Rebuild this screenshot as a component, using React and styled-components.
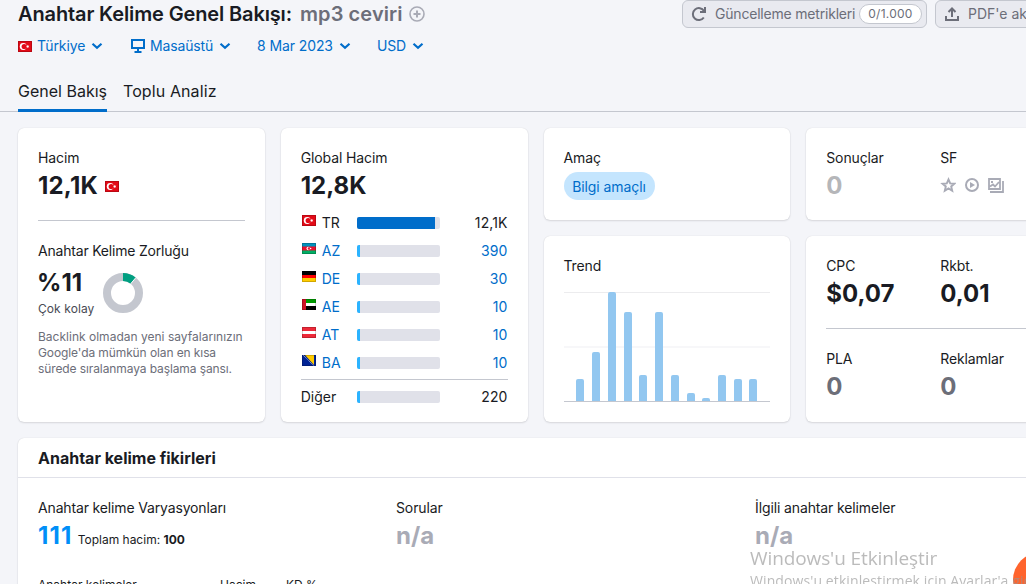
import React from "react";
import styled, { createGlobalStyle } from "styled-components";

const GlobalStyle = createGlobalStyle`
  * {
    box-sizing: border-box;
  }
  body {
    margin: 0;
    background: #f4f5f9;
    color: #191b23;
    font-family: Inter, "Liberation Sans", sans-serif;
    font-size: 14px;
    line-height: 20px;
    overflow: hidden;
  }
`;

const Page = styled.div`
  width: 100vw;
  height: 584px;
  overflow: hidden;
  white-space: nowrap;
`;

const Header = styled.header`
  height: 112px;
  padding: 0 0 0 18px;
  border-bottom: 1px solid #c4c7cf;
`;

const TitleRow = styled.div`
  display: flex;
  height: 28px;
  width: 1080px;
`;

const Title = styled.h1`
  margin: 0;
  width: 664px;
  display: flex;
  align-items: center;
  font-size: 20px;
  line-height: 28px;
  font-weight: 600;
  letter-spacing: -0.13px;
`;

const Keyword = styled.span`
  color: #6c6e79;
  margin: 0 6px 0 8px;
  letter-spacing: 0.1px;
`;

const HeadButton = styled.button`
  display: flex;
  align-items: center;
  flex: none;
  width: ${(p) => p.$width}px;
  height: 28px;
  margin-right: 8px;
  padding: 0 4px 0 8px;
  border: 1px solid #c4c7cf;
  border-radius: 6px;
  background: #e9eaf0;
  color: #6c6e79;
  font: 14px/20px Inter, sans-serif;
  letter-spacing: ${(p) => p.$spacing || 0}px;
  svg {
    flex: none;
    margin-right: 8px;
  }
`;

const Counter = styled.span`
  margin-left: auto;
  width: 63px;
  height: 20px;
  border: 1px solid #c4c7cf;
  border-radius: 10px;
  background: #fff;
  font-size: 12px;
  line-height: 18px;
  letter-spacing: 0.25px;
  text-align: center;
`;

const Filters = styled.div`
  display: flex;
  margin-top: 8px;
  height: 20px;
`;

const Filter = styled.div`
  display: flex;
  align-items: center;
  flex: none;
  width: ${(p) => p.$width}px;
  color: #006dca;
  letter-spacing: ${(p) => p.$spacing || 0}px;
  svg {
    flex: none;
  }
  svg:first-child {
    margin-right: 5px;
  }
  svg:last-child {
    margin-left: 6px;
  }
`;

const Tabs = styled.div`
  display: flex;
  gap: 16px;
  margin-top: 15px;
`;

const Tab = styled.div`
  height: 41px;
  font-size: 16px;
  line-height: 41px;
  width: ${(p) => p.$width}px;
  letter-spacing: ${(p) => p.$spacing || 0}px;
  border-bottom: 3px solid ${(p) => (p.$active ? "#006dca" : "transparent")};
`;

const Cards = styled.div`
  display: grid;
  grid-template-columns: repeat(4, 246.75px);
  grid-template-rows: 92px 186px;
  gap: 16px;
  padding: 16px 0 0 18px;
`;

const Card = styled.section`
  grid-row: ${(p) => (p.$tall ? "1 / 3" : "auto")};
  padding: 20px;
  background: #fff;
  border-radius: 6px;
  box-shadow: 0 0 1px rgba(25, 27, 35, 0.16), 0 1px 2px rgba(25, 27, 35, 0.12);
`;

const Label = styled.div`
  height: 20px;
  letter-spacing: ${(p) => p.$spacing || -0.12}px;
`;

const Value = styled.div`
  display: flex;
  align-items: center;
  height: 32px;
  margin-top: 2px;
  font-size: 24px;
  line-height: 32px;
  font-weight: 700;
  color: ${(p) => p.$color || "#191b23"};
  letter-spacing: ${(p) => p.$spacing || 0}px;
  svg {
    margin-left: 7px;
  }
`;

const Divider = styled.div`
  height: 1px;
  background: #c4c7cf;
  margin: ${(p) => p.$margin};
`;

const Difficulty = styled.div`
  display: flex;
  height: 58px;
  margin-top: 6px;
`;

const DifficultyText = styled.div`
  width: 65px;
  font-size: 12px;
  line-height: 16px;
  color: #484a54;
  letter-spacing: 0.08px;
  ${Value} {
    margin: 0 0 2px -1px;
  }
`;

const Donut = styled.svg`
  margin-top: 6px;
`;

const Description = styled.p`
  margin: 4px 0 0;
  font-size: 12px;
  line-height: 16px;
  color: #6c6e79;
`;

const DescriptionLine = styled.span`
  display: block;
  letter-spacing: ${(p) => p.$spacing}px;
`;

const Countries = styled.div`
  margin-top: 7px;
`;

const Country = styled.div`
  display: grid;
  grid-template-columns: 21px 35px 83px 1fr;
  align-items: center;
  height: 28px;
  color: ${(p) => (p.$link ? "#006dca" : "#191b23")};
  svg {
    margin: 0 0 5px 1px;
  }
`;

const CountryName = styled.span`
  grid-column: ${(p) => (p.$wide ? "1 / 3" : "auto")};
`;

const Track = styled.div`
  height: 12px;
  border-radius: 2px;
  overflow: hidden;
  background: #e0e1e9;
`;

const Fill = styled.div`
  height: 12px;
  background: ${(p) => (p.$main ? "#006dca" : "#2bb3ff")};
`;

const Amount = styled.span`
  text-align: right;
  letter-spacing: 0.1px;
`;

const Intent = styled.span`
  display: inline-block;
  margin-top: 4px;
  width: 91px;
  height: 28px;
  border-radius: 14px;
  background: #c4e5fe;
  color: #006dca;
  line-height: 29px;
  letter-spacing: -0.08px;
  text-align: center;
`;

const Chart = styled.svg`
  display: block;
  margin-top: 16px;
`;

const Pair = styled.div`
  display: grid;
  grid-template-columns: 114px 1fr;
`;

const Features = styled.div`
  display: flex;
  gap: 8px;
  margin-top: 9px;
  color: #a9abb6;
`;

const Ideas = styled.section`
  width: 1035px;
  height: 300px;
  margin: 16px 0 0 18px;
  background: #fff;
  border-radius: 6px;
  box-shadow: 0 0 1px rgba(25, 27, 35, 0.16), 0 1px 2px rgba(25, 27, 35, 0.12);
`;

const IdeasTitle = styled.h2`
  margin: 0;
  height: 40px;
  padding-left: 20px;
  border-bottom: 1px solid #e0e1e9;
  font-size: 16px;
  line-height: 40px;
  font-weight: 700;
`;

const IdeasGrid = styled.div`
  display: grid;
  grid-template-columns: 358px 359px 1fr;
  padding: 20px 0 0 20px;
`;

const Total = styled.span`
  margin-left: 5px;
  padding-top: 7px;
  font-size: 12px;
  font-weight: 400;
  color: #191b23;
  letter-spacing: 0;
`;

const TableHead = styled.div`
  display: grid;
  grid-template-columns: 182px 66px 1fr;
  margin-top: 23px;
  font-size: 12px;
`;

const ChatBubble = styled.div`
  position: fixed;
  left: 1013px;
  top: 552px;
  width: 56px;
  height: 56px;
  border-radius: 50%;
  background: #ff642d;
`;

const Watermark = styled.div`
  position: fixed;
  left: 750px;
  top: 546px;
  width: 276px;
  overflow: hidden;
  white-space: nowrap;
  font-family: "Open Sans", sans-serif;
  font-size: 14px;
  line-height: 20px;
  letter-spacing: 0.1px;
  color: rgba(150, 150, 150, 0.65);
`;

const WatermarkTitle = styled.div`
  font-size: 19px;
  line-height: 25px;
  letter-spacing: -0.1px;
`;

const Chevron = () => (
  <svg width="12" height="12" viewBox="0 0 12 12" fill="none">
    <path d="M1.500 3.800 6 7.800l4.500-4" stroke="currentColor" strokeWidth="2.200" />
  </svg>
);

const flags = {
  TR: (
    <>
      <rect width="14" height="11" fill="#e30a17" />
      <circle cx="5.200" cy="5.500" r="3.400" fill="#fff" />
      <circle cx="6.200" cy="5.500" r="2.600" fill="#e30a17" />
      <path d="m8 5.500 1.200-.4.100-1.300.8 1 1.200-.3-.7 1 .7 1-1.200-.3-.8 1-.1-1.300z" fill="#fff" />
    </>
  ),
  AZ: (
    <>
      <rect width="14" height="11" fill="#e8112d" />
      <rect width="14" height="3.500" fill="#0092bc" />
      <rect y="7.500" width="14" height="3.500" fill="#00ae65" />
      <circle cx="6.300" cy="5.500" r="1.800" fill="#fff" />
      <circle cx="7" cy="5.500" r="1.300" fill="#e8112d" />
      <circle cx="8.600" cy="5.500" r=".8" fill="#fff" />
    </>
  ),
  DE: (
    <>
      <rect width="14" height="4" fill="#000" />
      <rect y="4" width="14" height="3" fill="#f00" />
      <rect y="7" width="14" height="4" fill="#fc0" />
    </>
  ),
  AE: (
    <>
      <rect width="14" height="4" fill="#009a00" />
      <rect y="4" width="14" height="3" fill="#fff" />
      <rect y="7" width="14" height="4" fill="#000" />
      <rect width="4" height="11" fill="#ce1126" />
    </>
  ),
  AT: (
    <>
      <rect width="14" height="11" fill="#ed2939" />
      <rect y="4" width="14" height="3" fill="#fff" />
    </>
  ),
  BA: (
    <>
      <rect width="14" height="11" fill="#002395" />
      <path d="M3 0h9v10z" fill="#fecb00" />
      <path d="m1 0 11 11" stroke="#fff" strokeOpacity=".7" strokeDasharray="1 .7" />
    </>
  ),
};

const Flag = ({ code }) => (
  <svg width="14" height="11" viewBox="0 0 14 11">
    {flags[code]}
    <rect x=".5" y=".5" width="13" height="10" fill="none" stroke="#000" strokeOpacity=".18" />
  </svg>
);

const countries = [
  { code: "TR", value: "12,1K", fill: 78 },
  { code: "AZ", value: "390", fill: 3 },
  { code: "DE", value: "30", fill: 3 },
  { code: "AE", value: "10", fill: 3 },
  { code: "AT", value: "10", fill: 3 },
  { code: "BA", value: "10", fill: 3 },
];

// [x, height]
const trend = [
  [12, 22],
  [28, 49],
  [44, 109],
  [60, 89],
  [75, 26],
  [91, 89],
  [107, 26],
  [123, 8],
  [138, 3],
  [154, 26],
  [170, 22],
  [185, 22],
];

const barPath = (x, h) => {
  const top = 109 - h;
  return `M${x} 109V${top + 2}q0-2 2-2h4q2 0 2 2V109z`;
};

const App = () => {
  return (
    <Page>
      <GlobalStyle />
      <Header>
        <TitleRow>
          <Title>
            Anahtar Kelime Genel Bakışı:
            <Keyword>mp3 ceviri</Keyword>
            <svg width="16" height="16" viewBox="0 0 16 16" fill="none" stroke="#a9abb6" strokeWidth="2">
              <circle cx="8" cy="8" r="7" strokeWidth="1.600" />
              <path d="M8 4.500v7M4.500 8h7" />
            </svg>
          </Title>
          <HeadButton $width={245} $spacing={-0.2}>
            <svg width="16" height="16" viewBox="0 0 16 16" fill="none" stroke="currentColor" strokeWidth="2">
              <path d="M12.800 11.500a6 6 0 1 1 .2-6.500" />
              <path d="M14 1v5H9" />
            </svg>
            Güncelleme metrikleri
            <Counter>0/1.000</Counter>
          </HeadButton>
          <HeadButton $width={140}>
            <svg width="16" height="16" viewBox="0 0 16 16" fill="none" stroke="currentColor" strokeWidth="2">
              <path d="M2 10v4h12v-4M8 11V3M4.500 6 8 2.500 11.500 6" />
            </svg>
            PDF'e aktar
          </HeadButton>
        </TitleRow>
        <Filters>
          <Filter $width={113} $spacing={-0.1}>
            <Flag code="TR" />
            Türkiye
            <Chevron />
          </Filter>
          <Filter $width={126} $spacing={-0.15}>
            <svg width="14" height="14" viewBox="0 0 14 14" fill="none" stroke="currentColor" strokeWidth="2">
              <path d="M1 1h12v8H1zM7 9v3M3.500 13h7" />
            </svg>
            Masaüstü
            <Chevron />
          </Filter>
          <Filter $width={120} $spacing={-0.1}>
            8 Mar 2023
            <Chevron />
          </Filter>
          <Filter $width={60} $spacing={-0.2}>
            USD
            <Chevron />
          </Filter>
        </Filters>
        <Tabs>
          <Tab $active $width={89}>Genel Bakış</Tab>
          <Tab $width={94} $spacing={0.1}>Toplu Analiz</Tab>
        </Tabs>
      </Header>

      <Cards>
        <Card $tall>
          <Label>Hacim</Label>
          <Value $spacing={0.2}>
            12,1K
            <Flag code="TR" />
          </Value>
          <Divider $margin="18px 0 20px" />
          <Label $spacing={-0.2}>Anahtar Kelime Zorluğu</Label>
          <Difficulty>
            <DifficultyText>
              <Value>%11</Value>
              Çok kolay
            </DifficultyText>
            <Donut width="40" height="40" viewBox="0 0 40 40" fill="none" strokeWidth="8">
              <circle cx="20" cy="20" r="16" stroke="#c4c7cf" />
              <path d="M20 4a16 16 0 0 1 10.200 3.700" stroke="#009f81" />
              <path d="m27.700 10.800 5.100-6.100" stroke="#fff" strokeWidth="1" />
            </Donut>
          </Difficulty>
          <Description>
            <DescriptionLine $spacing={0.01}>Backlink olmadan yeni sayfalarınızın</DescriptionLine>
            <DescriptionLine $spacing={-0.1}>Google'da mümkün olan en kısa</DescriptionLine>
            <DescriptionLine $spacing={-0.1}>sürede sıralanmaya başlama şansı.</DescriptionLine>
          </Description>
        </Card>

        <Card $tall>
          <Label>Global Hacim</Label>
          <Value>12,8K</Value>
          <Countries>
            {countries.map((c) => (
              <Country key={c.code} $link={c.code !== "TR"}>
                <Flag code={c.code} />
                <CountryName>{c.code}</CountryName>
                <Track>
                  <Fill $main={c.code === "TR"} style={{ width: c.fill }} />
                </Track>
                <Amount>{c.value}</Amount>
              </Country>
            ))}
            <Divider $margin="2px 0 3px" />
            <Country>
              <CountryName $wide>Diğer</CountryName>
              <Track>
                <Fill style={{ width: 3 }} />
              </Track>
              <Amount>220</Amount>
            </Country>
          </Countries>
        </Card>

        <Card>
          <Label>Amaç</Label>
          <Intent>Bilgi amaçlı</Intent>
        </Card>

        <Card>
          <Pair>
            <div>
              <Label>Sonuçlar</Label>
              <Value $color="#b5b6b9">0</Value>
            </div>
            <div>
              <Label>SF</Label>
              <Features>
                <svg width="16" height="16" viewBox="0 0 16 16" fill="none" stroke="currentColor" strokeWidth="1.900">
                  <path d="m8.500 2.500 1.700 3.900 4.200.3-3.200 2.700 1 4.300-3.700-2.300-3.700 2.300 1-4.300-3.200-2.700 4.200-.3z" />
                </svg>
                <svg width="16" height="16" viewBox="0 0 16 16" fill="none" stroke="currentColor" strokeWidth="2">
                  <circle cx="8" cy="8" r="6" />
                  <path d="m6 5 5 3-5 3z" fill="currentColor" stroke="none" />
                </svg>
                <svg width="16" height="16" viewBox="0 0 16 16" fill="none" stroke="currentColor" strokeWidth="1.800">
                  <path d="M1 2h11v10H1zM15 4v11H2M2 9.500l3-2 2 2 4-4.500" />
                  <path d="M3 4h2v2H3z" fill="currentColor" stroke="none" />
                </svg>
              </Features>
            </div>
          </Pair>
        </Card>

        <Card>
          <Label>Trend</Label>
          <Chart width="206" height="110" viewBox="0 0 206 110">
            <path d="M0 .5h206" stroke="#ececee" />
            <path d="M0 55h206" stroke="#f7f7f9" strokeWidth="2" />
            {trend.map(([x, h]) => (
              <path key={x} d={barPath(x, h)} fill="#92c7f0" />
            ))}
            <path d="M0 109.500h206" stroke="#c4c7cf" />
          </Chart>
        </Card>

        <Card>
          <Pair>
            <div>
              <Label>CPC</Label>
              <Value>$0,07</Value>
            </div>
            <div>
              <Label>Rkbt.</Label>
              <Value>0,01</Value>
            </div>
          </Pair>
          <Divider $margin="18px 0 20px" />
          <Pair>
            <div>
              <Label>PLA</Label>
              <Value $color="#6c6e79">0</Value>
            </div>
            <div>
              <Label>Reklamlar</Label>
              <Value $color="#6c6e79">0</Value>
            </div>
          </Pair>
        </Card>
      </Cards>

      <Ideas>
        <IdeasTitle>Anahtar kelime fikirleri</IdeasTitle>
        <IdeasGrid>
          <div>
            <Label $spacing={-0.15}>Anahtar kelime Varyasyonları</Label>
            <Value $color="#008ff8" $spacing={1.2}>
              111
              <Total>
                Toplam hacim: <b>100</b>
              </Total>
            </Value>
            <TableHead>
              <span>Anahtar kelimeler</span>
              <span>Hacim</span>
              <span>KD %</span>
            </TableHead>
          </div>
          <div>
            <Label>Sorular</Label>
            <Value $color="#a9abb6">n/a</Value>
          </div>
          <div>
            <Label>İlgili anahtar kelimeler</Label>
            <Value $color="#a9abb6">n/a</Value>
          </div>
        </IdeasGrid>
      </Ideas>

      <ChatBubble />
      <Watermark>
        <WatermarkTitle>Windows'u Etkinleştir</WatermarkTitle>
        Windows'u etkinleştirmek için Ayarlar'a gidin.
      </Watermark>
    </Page>
  );
};

export default App;
